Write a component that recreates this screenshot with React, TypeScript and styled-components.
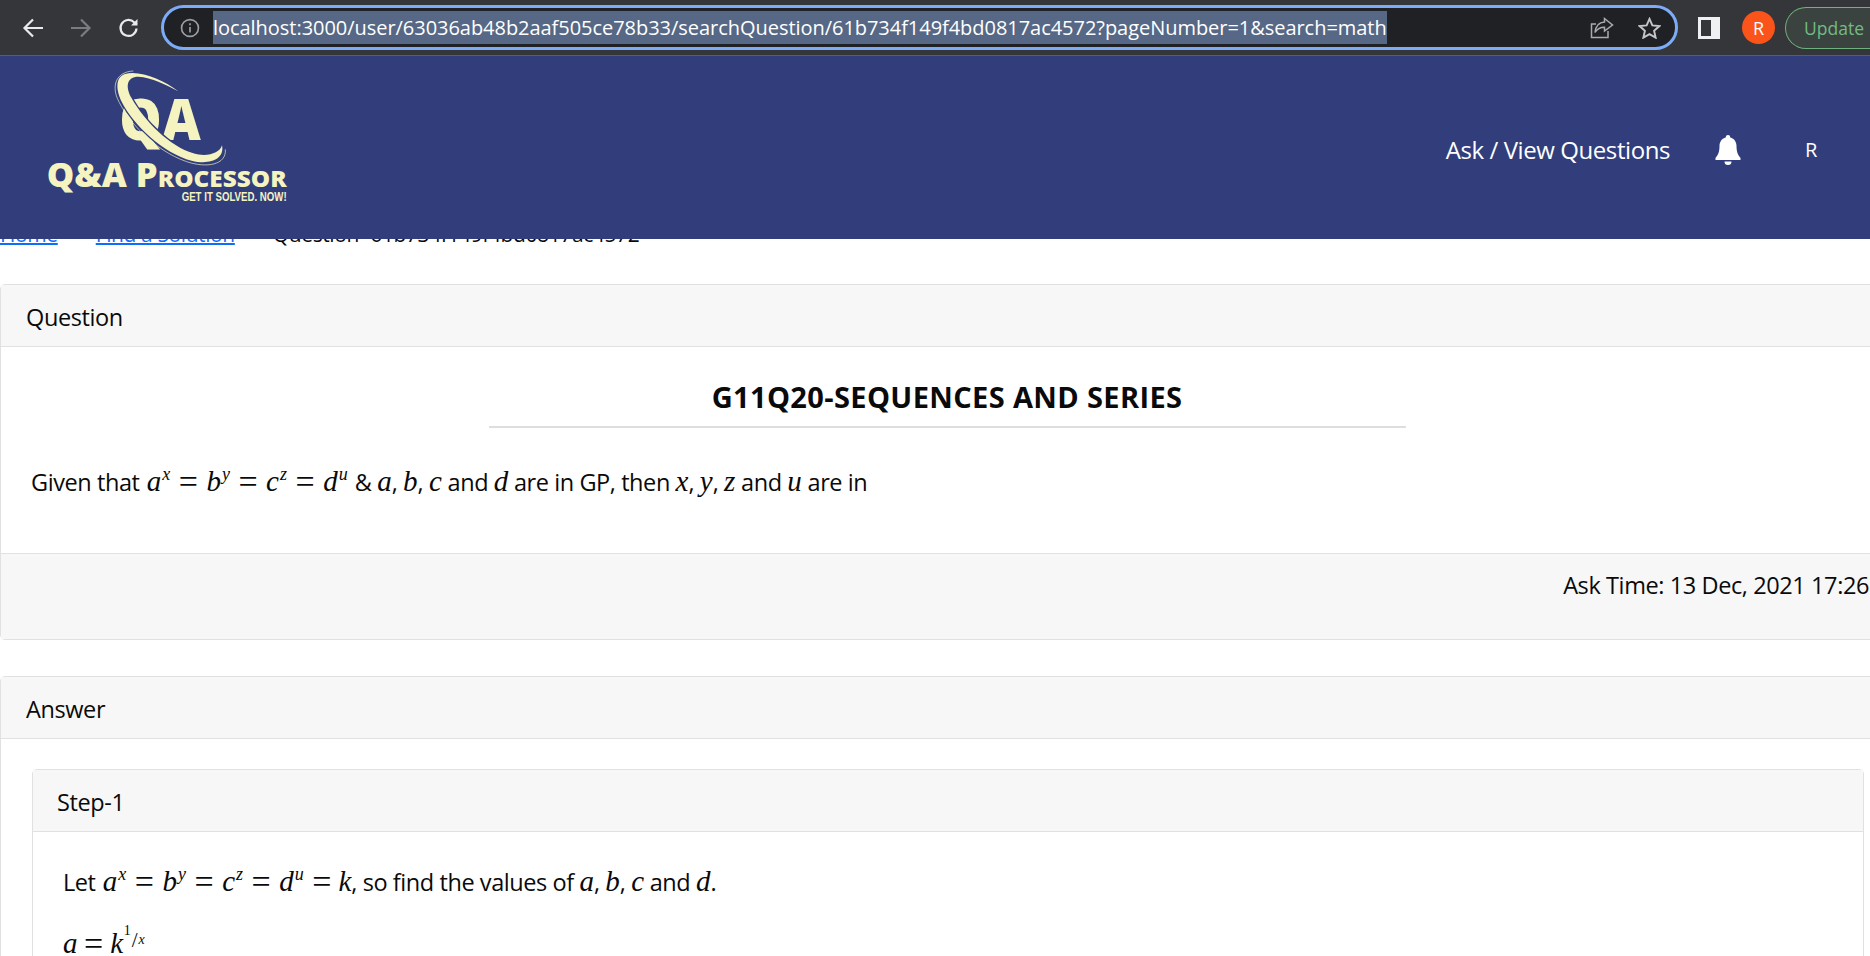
import React from "react";
import styled, { createGlobalStyle } from "styled-components";

const Global = createGlobalStyle`
  html, body { margin: 0; padding: 0; width: 1870px; height: 956px; overflow: hidden; background: #fff; }
  body { font-family: "Open Sans", "Liberation Sans", sans-serif; color: #0a0a0a; }
  #root { width: 1894px; }
`;

const Toolbar = styled.div`
  height: 55px; background: #35363a; border-bottom: 1px solid #5c5d60; display: flex; align-items: center; width: 1870px; overflow: hidden; box-sizing: content-box;
`;
const NavIcon = styled.svg<{ $ml: number }>`
  margin-left: ${(p) => p.$ml}px; flex: none;
`;
const Omnibox = styled.div`
  margin-left: 21px; width: 1517px; height: 45px; box-sizing: border-box; border: 3px solid #7cacf8; border-radius: 23px; background: #202124; display: flex; align-items: center; flex: none;
`;
const InfoIcon = styled.svg`
  margin-left: 16px; margin-right: 13px; flex: none;
`;
const Url = styled.span`
  background: #566885; color: #fff; font-size: 20px; line-height: 33px; height: 33px; letter-spacing: -0.04px; white-space: nowrap;
`;
const OmniRight = styled.div`
  margin-left: auto; margin-right: 14px; display: flex; gap: 24px; align-items: center;
`;
const Avatar = styled.div`
  width: 33px; height: 33px; border-radius: 50%; background: #fb541b; color: #fff; display: flex; align-items: center; justify-content: center; font-size: 18px; margin-left: 22px; flex: none;
`;
const Update = styled.div`
  margin-left: 10px; width: 110px; height: 42px; box-sizing: border-box; border: 1.5px solid #6fb27c; border-radius: 21px 0 0 21px; border-right: 0; color: #72bb80; background: #3b4340; font-size: 17.5px; display: flex; align-items: center; padding-left: 18px; flex: none;
`;

const Nav = styled.header`
  position: relative; z-index: 2; height: 183px; background: #313e7b; display: flex; align-items: flex-start; width: 1870px;
`;
const Logo = styled.svg`
  margin: 4px 0 0 30px; flex: none;
`;
const NavLinks = styled.nav`
  margin-left: auto; height: 183px; display: flex; align-items: center; color: #fff; padding-right: 51px; padding-top: 4px; box-sizing: border-box;
`;
const NavLink = styled.span`
  font-size: 24px; letter-spacing: -0.42px;
`;
const Bell = styled.svg`
  margin-left: 45px;
`;
const Initial = styled.span`
  font-size: 20px; margin-left: 64px; width: 14px;
`;

const Breadcrumb = styled.div`
  display: flex; height: 32px; margin-top: -21px; align-items: flex-end; font-size: 21px; line-height: 32px; gap: 38px; letter-spacing: -0.4px; color: #0a0a0a;
  a { color: #0d6efd; text-decoration: underline; text-decoration-thickness: 2px; }
`;
const Main = styled.main`
  padding-top: 34px; display: flex; flex-direction: column; gap: 36px;
`;
const Card = styled.section<{ $inner?: boolean }>`
  border: 1.5px solid #e1e1e1; border-radius: 5px; background: #fff; box-sizing: border-box; ${(p) => (p.$inner ? "" : "width: 1894px;")}
`;
const CardHeader = styled.div<{ $inner?: boolean }>`
  height: 62px; padding-top: 3px; background: #f7f7f7; border-bottom: 1.5px solid #e1e1e1; box-sizing: border-box; padding-left: ${(p) => (p.$inner ? 24 : 25)}px; display: flex; align-items: center; font-size: 23.5px; letter-spacing: -0.4px;
`;
const QuestionBody = styled.div`
  height: 205.5px; box-sizing: border-box; padding: 32px 30px 0;
`;
const Title = styled.h1`
  margin: 0 auto; width: 917px; box-sizing: border-box; text-align: center; font-size: 29px; font-weight: 700; line-height: 36px; padding-bottom: 11px; border-bottom: 2px solid #dedede; color: #0a0a0a; letter-spacing: 0.37px;
`;
const Text = styled.p<{ $top: number }>`
  margin: ${(p) => p.$top}px 0 0; font-size: 23.5px; line-height: 32px; letter-spacing: -0.42px; white-space: nowrap;
`;
const M = styled.i<{ $sup?: boolean }>`
  font-family: "Liberation Serif", "DejaVu Serif", serif; font-size: 29px; letter-spacing: 0; margin: 0 ${(p) => (p.$sup ? 1.5 : 0)}px;
`;
const Sup = styled.sup`
  font-family: "Liberation Serif", serif; font-style: italic; font-size: 18px; line-height: 0; vertical-align: 11px; letter-spacing: 0; margin-left: 1px;
`;
const Eq = styled.span`
  font-family: "Liberation Serif", serif; font-size: 34px; line-height: 0; margin: 0 7px; letter-spacing: 0; vertical-align: -2px;
`;
const CardFooter = styled.div`
  height: 86px; background: #f7f7f7; border-top: 1.5px solid #e1e1e1; box-sizing: border-box; padding: 15px 24px 0 0; text-align: right; font-size: 23.5px; line-height: 32px; letter-spacing: -0.4px;
`;
const AnswerBody = styled.div`
  padding: 30px 29.5px 0 31px;
`;
const StepBody = styled.div`
  padding: 33px 30px 0; min-height: 400px;
`;
const Root = styled.div`
  width: 1894px;
`;
const FracBase = styled.span`
  font-family: "Liberation Serif", serif; font-style: italic; font-size: 29px;
`;
const Exponent = styled.span`
  font-family: "Liberation Serif", serif; letter-spacing: 0; line-height: 0; margin-left: 1px;
`;
const ExpTop = styled.span`
  font-size: 14px; vertical-align: 18px; line-height: 0;
`;
const ExpSlash = styled.span`
  font-size: 21px; vertical-align: 6px; line-height: 0; margin: 0 1px;
`;
const ExpBottom = styled.i`
  font-size: 14px; vertical-align: 9px; line-height: 0;
`;

const Mth = ({ b, s }: { b: string; s?: string }) => (
  <M $sup={!!s}>{b}{s ? <Sup>{s}</Sup> : null}</M>
);

export default function App() {
  return (
    <Root>
      <Global />
      <Toolbar>
        <NavIcon $ml={22} width="22" height="22" viewBox="0 0 22 22" fill="none" stroke="#e8eaed" strokeWidth="2.2"><path d="M21 11H2.500M11 2.500 2.500 11l8.500 8.500" /></NavIcon>
        <NavIcon $ml={26} width="22" height="22" viewBox="0 0 22 22" fill="none" stroke="#7b7c7f" strokeWidth="2.2"><path d="M1 11h18.500M11 2.500l8.500 8.500-8.500 8.500" /></NavIcon>
        <NavIcon $ml={26} width="22" height="22" viewBox="0 0 22 22" fill="none" stroke="#e8eaed" strokeWidth="2.2"><path d="M18.500 11.500a8 8 0 1 1-2.400-6.300L18.500 7.500" /><path d="M19.500 2v6.500H13" fill="#e8eaed" stroke="none" /></NavIcon>
        <Omnibox>
          <InfoIcon width="20" height="20" viewBox="0 0 18 18" fill="none" stroke="#9aa0a6" strokeWidth="1.5"><circle cx="9" cy="9" r="7.600" /><path d="M9 8v5M9 4.800v1.800" /></InfoIcon>
          <Url>localhost:3000/user/63036ab48b2aaf505ce78b33/searchQuestion/61b734f149f4bd0817ac4572?pageNumber=1&amp;search=math</Url>
          <OmniRight>
            <svg width="24" height="22" viewBox="0 0 24 22" fill="none" stroke="#a9abae" strokeWidth="1.5"><path d="M18 14v6.500H1.500V7H6" /><path d="M14.500 1.500 22.500 8l-8 6v-3.700C10 10.300 7 12 5 15.500 5.500 10 8.500 5.500 14.500 5z" /></svg>
            <svg width="23" height="22" viewBox="0 0 24 23" fill="none" stroke="#c4c6c9" strokeWidth="2"><path d="m12 2 3 6.800 7.300.7-5.500 4.900 1.600 7.200L12 17.900l-6.400 3.700 1.600-7.200L1.700 9.500 9 8.800z" /></svg>
          </OmniRight>
        </Omnibox>
        <NavIcon $ml={20} width="22" height="22" viewBox="0 0 22 22"><rect x="1.500" y="1.500" width="19" height="19" fill="none" stroke="#eef0f2" strokeWidth="3" /><rect x="13" y="1.500" width="8" height="19" fill="#eef0f2" /></NavIcon>
        <Avatar>R</Avatar>
        <Update>Update</Update>
      </Toolbar>

      <Nav>
        <Logo width="270" height="150" viewBox="0 0 810 450">
          <text x="268" y="241" fontFamily="'Open Sans', sans-serif" fontWeight="800" fontSize="170" fill="#f5f3c0" textLength="244" lengthAdjust="spacingAndGlyphs">QA</text>
          <path d="M445 94 C 400 60 330 30 285 42 C 255 52 258 90 275 125 C 310 195 400 280 485 302 C 535 315 585 300 576 256 C 570 280 530 292 490 280 C 420 260 345 185 305 115 C 285 80 290 50 325 50 C 365 52 410 75 445 94Z" fill="#f5f3c0" stroke="#313e7b" strokeWidth="8" paintOrder="stroke" />
          <path d="M310 33 C 260 35 245 75 262 115 C 290 180 370 270 470 305 C 530 325 590 315 586 268" fill="none" stroke="#f5f3c0" strokeWidth="2" />
          <text x="50" y="380" fontFamily="'Open Sans', sans-serif" fontWeight="800" fontSize="98" fill="#f5f3c0" textLength="720" lengthAdjust="spacingAndGlyphs" style={{ fontVariant: "small-caps" }}>Q&amp;A Processor</text>
          <text x="455" y="422" fontFamily="'Liberation Sans', sans-serif" fontWeight="700" fontSize="38" fill="#f5f3c0" textLength="315" lengthAdjust="spacingAndGlyphs">GET IT SOLVED. NOW!</text>
        </Logo>
        <NavLinks>
          <NavLink>Ask / View Questions</NavLink>
          <Bell width="26" height="30" viewBox="0 0 26 30" fill="#fff"><path d="M13 0a2.200 2.200 0 0 0-2.200 2.400C6.500 3.400 4.500 7 4.500 11c0 6-1.500 9-4 12v2h25v-2c-2.500-3-4-6-4-12 0-4-2-7.600-6.300-8.600A2.200 2.200 0 0 0 13 0zM9.500 26.500a3.500 3.500 0 0 0 7 0z" /></Bell>
          <Initial>R</Initial>
        </NavLinks>
      </Nav>

      <Breadcrumb>
        <a>Home</a>
        <a>Find a Solution</a>
        <span>Question- 61b734f149f4bd0817ac4572</span>
      </Breadcrumb>

      <Main>
        <Card>
          <CardHeader>Question</CardHeader>
          <QuestionBody>
            <Title>G11Q20-SEQUENCES AND SERIES</Title>
            <Text $top={37}>
              Given that <Mth b="a" s="x" /><Eq>=</Eq><Mth b="b" s="y" /><Eq>=</Eq><Mth b="c" s="z" /><Eq>=</Eq><Mth b="d" s="u" /> &amp; <Mth b="a" />, <Mth b="b" />, <Mth b="c" /> and <Mth b="d" /> are in GP, then <Mth b="x" />, <Mth b="y" />, <Mth b="z" /> and <Mth b="u" /> are in
            </Text>
          </QuestionBody>
          <CardFooter>Ask Time: 13 Dec, 2021 17:26</CardFooter>
        </Card>
        <Card>
          <CardHeader>Answer</CardHeader>
          <AnswerBody>
            <Card $inner>
              <CardHeader $inner>Step-1</CardHeader>
              <StepBody>
                <Text $top={0}>
                  Let <Mth b="a" s="x" /><Eq>=</Eq><Mth b="b" s="y" /><Eq>=</Eq><Mth b="c" s="z" /><Eq>=</Eq><Mth b="d" s="u" /><Eq>=</Eq><Mth b="k" />, so find the values of <Mth b="a" />, <Mth b="b" />, <Mth b="c" /> and <Mth b="d" />.
                </Text>
                <Text $top={29}>
                  <FracBase>a</FracBase><Eq>=</Eq><FracBase>k</FracBase><Exponent><ExpTop>1</ExpTop><ExpSlash>/</ExpSlash><ExpBottom>x</ExpBottom></Exponent>
                </Text>
              </StepBody>
            </Card>
          </AnswerBody>
        </Card>
      </Main>
    </Root>
  );
}
